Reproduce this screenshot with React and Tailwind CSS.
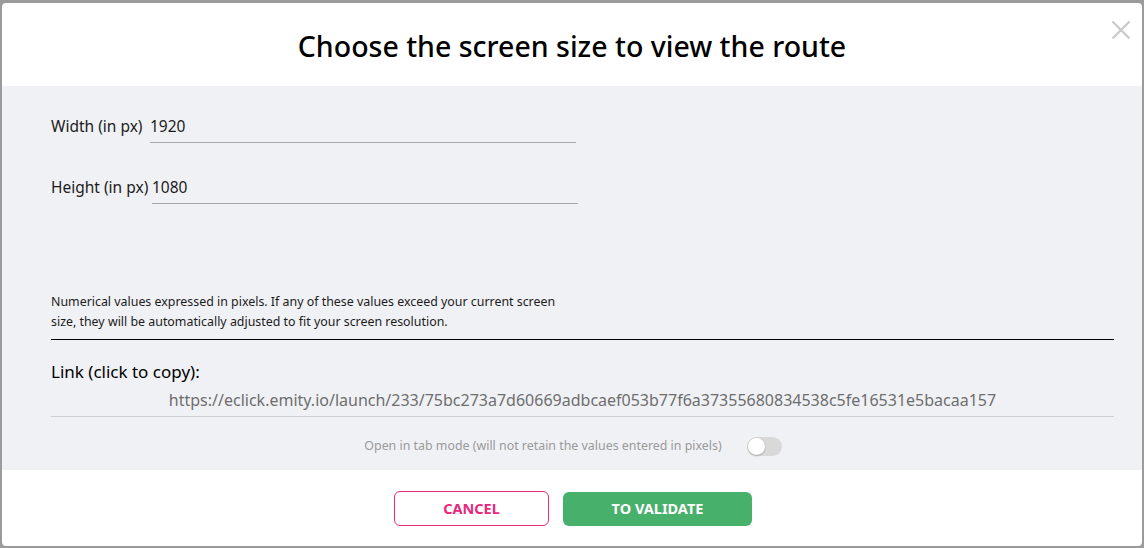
const font = { fontFamily: "'Noto Sans', Lato, sans-serif" };

const Field = ({ label, value, labelW }) => (
  <div className="flex items-end h-[30px]">
    <span className={`text-[15.5px] text-[#1c1c1c] leading-[20px] pb-[7px] ${labelW}`}>{label}</span>
    <div className="w-[426px] h-[30px] border-b border-[#a8a8a8] flex items-end pb-[6px] text-[15.5px] text-[#1c1c1c] leading-[20px]">
      {value}
    </div>
  </div>
);

export default function App() {
  return (
    <div className="w-[1144px] h-[548px] bg-[#9b9b9b] pt-[3px] pl-[2px] pr-[2px] pb-[2px]" style={font}>
      <div className="w-full h-full bg-white rounded-[4px] flex flex-col overflow-hidden">
        <div className="relative h-[83px] flex items-center justify-center shrink-0 pt-[4px]">
          <h1 className="text-[28.5px] text-black font-medium tracking-[0]">Choose the screen size to view the route</h1>
          <svg className="absolute right-[11px] top-[17px] w-[20px] h-[20px]" viewBox="0 0 20 20" fill="none">
            <path d="M1.5 1.5 L18.5 18.5 M18.5 1.5 L1.5 18.5" stroke="#c9c9c9" strokeWidth="2.2" />
          </svg>
        </div>
        <div className="h-[384px] bg-[#f0f1f5] pl-[49px] pr-[28px] shrink-0 flex flex-col">
          <div className="mt-[27px]">
            <Field label="Width (in px)" value="1920" labelW="w-[99px]" />
          </div>
          <div className="mt-[31px]">
            <Field label="Height (in px)" value="1080" labelW="w-[101px]" />
          </div>
          <p className="mt-[88px] text-[12.4px] leading-[20px] text-[#1c1c1c] w-[520px]">
            Numerical values expressed in pixels. If any of these values exceed your current screen size, they will be automatically adjusted to fit your screen resolution.
          </p>
          <div className="mt-[7px] h-px bg-black"></div>
          <div className="mt-[21px] text-[17px] leading-[22px] text-black">Link (click to copy):</div>
          <div className="h-[34px] border-b border-[#cfcfcf] flex items-start justify-center pt-[8px] text-[16px] leading-[18px] text-[#6e6e6e]">
            https://eclick.emity.io/launch/233/75bc273a7d60669adbcaef053b77f6a37355680834538c5fe16531e5bacaa157
          </div>
          <div className="mt-[20px] flex items-center justify-center gap-[25px] pr-[19px]">
            <span className="text-[12.4px] text-[#9a9a9a]">Open in tab mode (will not retain the values entered in pixels)</span>
            <div className="w-[35px] h-[19px] rounded-full bg-[#d9d9d9] relative">
              <div className="absolute left-[1px] top-[1px] w-[17px] h-[17px] rounded-full bg-white shadow-[0_1px_2px_rgba(0,0,0,0.25)]"></div>
            </div>
          </div>
        </div>
        <div className="flex-1 flex justify-center items-start pt-[21px] pl-[2px] gap-[14px]">
          <button className="w-[155px] h-[35px] rounded-[6px] border border-[#ea2c7a] text-[#e8287a] text-[14.5px] font-bold bg-white">
            CANCEL
          </button>
          <button className="w-[189px] h-[34px] mt-[1px] rounded-[6px] bg-[#47b06a] text-white text-[14.5px] font-bold">
            TO VALIDATE
          </button>
        </div>
      </div>
    </div>
  );
}
